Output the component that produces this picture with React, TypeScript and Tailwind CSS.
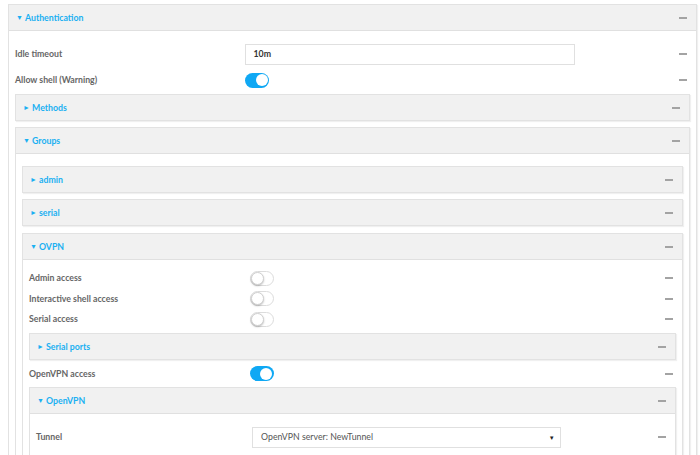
import React from "react";

const Minus = () => <span className="block w-[8px] h-[2px] bg-[#a3a3a3] shrink-0" />;

const Toggle = ({ on }: { on: boolean }) =>
  on ? (
    <span className="relative block w-[24px] h-[15px] rounded-full bg-[#0fa8f4]">
      <span className="absolute right-[1.5px] top-[1.5px] w-[12px] h-[12px] rounded-full bg-white" />
    </span>
  ) : (
    <span className="relative block w-[24px] h-[15px] rounded-full bg-white border border-[#dcdcdc]">
      <span className="absolute left-[0px] top-[0px] w-[13px] h-[13px] rounded-full bg-white border border-[#d0d0d0] shadow-[0_1px_2px_rgba(0,0,0,0.25)]" />
    </span>
  );

const Panel = ({
  title,
  open,
  children,
  className = "",
  bodyClass = "",
}: {
  title: string;
  open: boolean;
  children?: React.ReactNode;
  className?: string;
  bodyClass?: string;
}) => (
  <div className={`border border-[#e2e2e2] shadow-[1px_1px_1px_rgba(0,0,0,0.06)] bg-white ${className}`}>
    <div className={`flex items-center pl-[7px] pr-[9px] bg-[#f1f1f1] ${open ? "h-[26px] border-b border-[#e0e0e0]" : "h-[25px]"}`}>
      <span className="text-[7px] text-[#1ab0f2] w-[9px] leading-none">{open ? "▼" : "►"}</span>
      <span className="text-[#1ab0f2] font-bold text-[8.75px]">{title}</span>
      <span className="flex-1" />
      <Minus />
    </div>
    {open && <div className={bodyClass}>{children}</div>}
  </div>
);

const Row = ({ label, children, h = "h-[26px]" }: { label: string; children?: React.ReactNode; h?: string }) => (
  <div className={`flex items-center ${h} pr-[3px]`}>
    <span className="w-[34.3%] text-[8.75px] font-bold text-[#666]">{label}</span>
    <div className="w-[49%] flex items-center">{children}</div>
    <span className="flex-1" />
    <Minus />
  </div>
);

export default function App() {
  return (
    <div className="w-[700px] h-[455px] overflow-hidden bg-white pt-[4px] pl-[8px] pr-[3px]" style={{ fontFamily: "Lato, 'Liberation Sans', sans-serif" }}>
      <Panel title="Authentication" open bodyClass="px-[6px] pt-[10px] pb-[40px]">
        <Row label="Idle timeout">
          <div className="w-full h-[21px] border border-[#e0e0e0] flex items-center px-[7px] text-[8.75px] font-bold text-[#333]">10m</div>
        </Row>
        <Row label="Allow shell (Warning)">
          <Toggle on />
        </Row>
        <Panel title="Methods" open={false} className="mt-[1px]" />
        <Panel title="Groups" open className="mt-[6px]" bodyClass="px-[6px] pt-[12px] pb-[40px]">
          <Panel title="admin" open={false} />
          <Panel title="serial" open={false} className="mt-[6px]" />
          <Panel title="OVPN" open className="mt-[7px]" bodyClass="px-[6px] pt-[8px] pb-[40px]">
            <Row label="Admin access" h="h-[20px]">
              <Toggle on={false} />
            </Row>
            <Row label="Interactive shell access" h="h-[21px]">
              <Toggle on={false} />
            </Row>
            <Row label="Serial access" h="h-[20px]">
              <Toggle on={false} />
            </Row>
            <Panel title="Serial ports" open={false} className="mt-[4px]" />
            <Row label="OpenVPN access" h="h-[27px]">
              <Toggle on />
            </Row>
            <Panel title="OpenVPN" open bodyClass="px-[6px] pt-[10px] pb-[40px]">
              <Row label="Tunnel">
                <div className="w-full h-[21px] border border-[#e0e0e0] flex items-center pl-[8px] pr-[5px] text-[8.75px] text-[#555]">
                  <span>OpenVPN server: NewTunnel</span>
                  <span className="flex-1" />
                  <span className="text-[6px] text-[#222]">▼</span>
                </div>
              </Row>
            </Panel>
          </Panel>
        </Panel>
      </Panel>
    </div>
  );
}
